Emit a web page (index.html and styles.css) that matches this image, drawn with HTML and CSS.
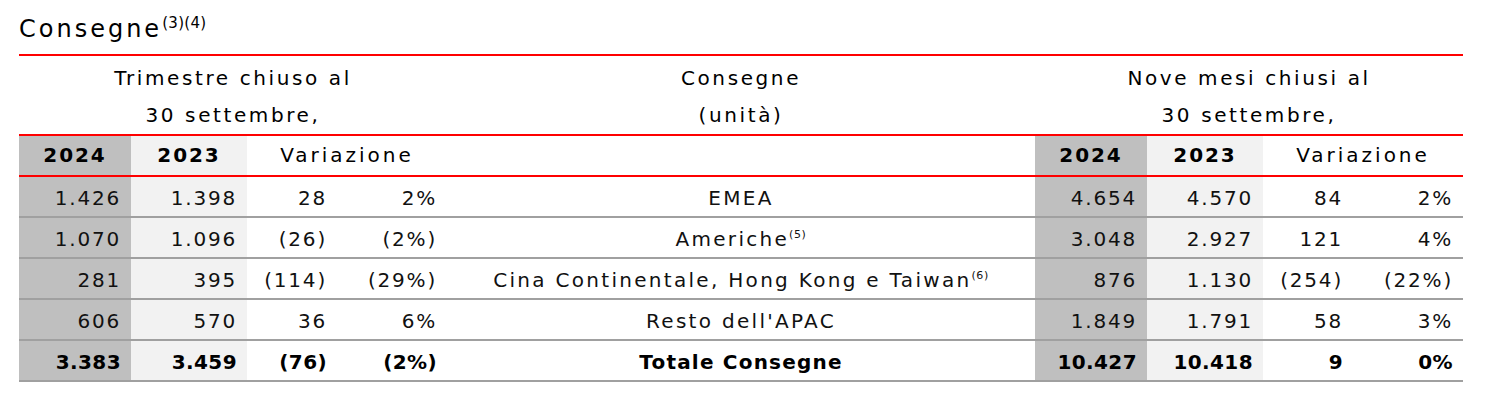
FILE: index.html
```html
<!DOCTYPE html>
<html lang="it">
<head>
<meta charset="utf-8">
<title>Consegne</title>
<link rel="stylesheet" href="styles.css">
</head>
<body>
<div class="title">Consegne<sup class="fn-title">(3)(4)</sup></div>
<table class="deliv">
  <colgroup>
    <col class="w-y24"><col class="w-y23"><col class="w-v1"><col class="w-v2">
    <col class="w-mid">
    <col class="w-y24"><col class="w-y23"><col class="w-v1"><col class="w-v2">
  </colgroup>
  <thead>
    <tr class="period">
      <th colspan="4">Trimestre chiuso al<br>30 settembre,</th>
      <th>Consegne<br>(unità)</th>
      <th colspan="4">Nove mesi chiusi al<br>30 settembre,</th>
    </tr>
    <tr class="years">
      <th class="dark yr">2024</th>
      <th class="light yr">2023</th>
      <th colspan="2" class="var">Variazione</th>
      <th></th>
      <th class="dark yr">2024</th>
      <th class="light yr">2023</th>
      <th colspan="2" class="var">Variazione</th>
    </tr>
  </thead>
  <tbody>
    <tr>
      <td class="dark num">1.426</td><td class="light num">1.398</td><td class="num">28</td><td class="num">2%</td>
      <td class="label">EMEA</td>
      <td class="dark num">4.654</td><td class="light num">4.570</td><td class="num">84</td><td class="num">2%</td>
    </tr>
    <tr>
      <td class="dark num">1.070</td><td class="light num">1.096</td><td class="num">(26)</td><td class="num">(2%)</td>
      <td class="label">Americhe<sup class="fn">(5)</sup></td>
      <td class="dark num">3.048</td><td class="light num">2.927</td><td class="num">121</td><td class="num">4%</td>
    </tr>
    <tr>
      <td class="dark num">281</td><td class="light num">395</td><td class="num">(114)</td><td class="num">(29%)</td>
      <td class="label">Cina Continentale, Hong Kong e Taiwan<sup class="fn">(6)</sup></td>
      <td class="dark num">876</td><td class="light num">1.130</td><td class="num">(254)</td><td class="num">(22%)</td>
    </tr>
    <tr>
      <td class="dark num">606</td><td class="light num">570</td><td class="num">36</td><td class="num">6%</td>
      <td class="label">Resto dell'APAC</td>
      <td class="dark num">1.849</td><td class="light num">1.791</td><td class="num">58</td><td class="num">3%</td>
    </tr>
    <tr class="total">
      <td class="dark num">3.383</td><td class="light num">3.459</td><td class="num">(76)</td><td class="num">(2%)</td>
      <td class="label">Totale Consegne</td>
      <td class="dark num">10.427</td><td class="light num">10.418</td><td class="num">9</td><td class="num">0%</td>
    </tr>
  </tbody>
</table>
</body>
</html>
```

FILE: styles.css
```css
html, body {
  margin: 0;
  padding: 0;
  background: #ffffff;
}

body {
  padding: 15px 0 0 19px;
  font-family: "DejaVu Sans", "Liberation Sans", sans-serif;
  color: #111111;
}

.title {
  font-size: 24px;
  line-height: 28px;
  letter-spacing: 3px;
  color: #000000;
  margin-bottom: 11px;
}

.fn-title {
  font-size: 15px;
  letter-spacing: 0.3px;
  line-height: 0;
  vertical-align: 9px;
}

.deliv {
  width: 1444px;
  table-layout: fixed;
  border-collapse: separate;
  border-spacing: 0;
  border-top: 2px solid #ff0000;
  font-size: 20px;
}

.w-y24 { width: 112px; }
.w-y23 { width: 116px; }
.w-v1 { width: 90px; }
.w-v2 { width: 110px; }
.w-mid { width: 588px; }

.deliv th,
.deliv td {
  padding: 0;
  white-space: nowrap;
}

.period th {
  font-weight: 400;
  letter-spacing: 2.6px;
  line-height: 37px;
  padding-top: 4px;
  text-align: center;
  vertical-align: top;
  color: #000000;
  border-bottom: 2px solid #ff0000;
}

.years th {
  line-height: 39px;
  text-align: center;
  color: #000000;
  border-bottom: 2px solid #ff0000;
}

.years .yr {
  font-weight: 700;
  letter-spacing: 1.9px;
}

.years .var {
  font-weight: 400;
  letter-spacing: 3px;
}

.dark { background: #bfbfbf; }
.light { background: #f2f2f2; }

.deliv tbody td {
  line-height: 36px;
  padding-top: 3px;
  border-bottom: 2px solid #a0a0a0;
}

.num {
  text-align: right;
  letter-spacing: 1.8px;
  padding-right: 10px !important;
}

.label {
  text-align: center;
  letter-spacing: 2.3px;
}

.fn {
  font-size: 11px;
  letter-spacing: 0.6px;
  line-height: 0;
  vertical-align: 8px;
}

.total td {
  font-weight: 700;
  color: #000000;
}

.total .num {
  letter-spacing: 0.4px;
}

.total .label {
  letter-spacing: 1.2px;
}
```
